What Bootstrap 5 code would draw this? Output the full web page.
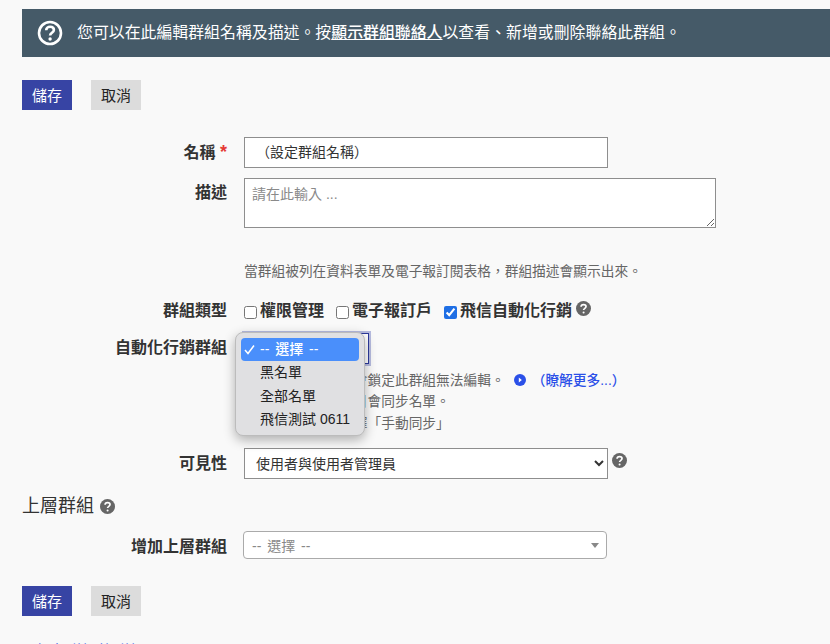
<!DOCTYPE html>
<html lang="zh-Hant">
<head>
    <meta charset="UTF-8">
    <meta name="viewport" content="width=device-width, initial-scale=1.0">
    <title>編輯群組</title>
    <link href="https://cdn.jsdelivr.net/npm/bootstrap@5.3.3/dist/css/bootstrap.min.css" rel="stylesheet">
    <script src="https://cdn.jsdelivr.net/npm/bootstrap@5.3.3/dist/js/bootstrap.bundle.min.js"></script>
    <style>
        html, body {
            height: 644px;
            overflow: hidden;
        }
        body {
            background-color: #f9f9f9;
            font-family: "Liberation Sans", "Noto Sans CJK TC", sans-serif;
            font-size: 14px;
            color: #333;
            padding: 9px 0 0 22px;
        }
        .info-bar {
            height: 48px;
            background-color: #455a68;
            color: #fff;
            font-size: 15.9px;
            padding-left: 15px;
            gap: 14px;
        }
        .info-bar a { color: #fff; font-weight: 500; }
        .act-row { gap: 19px; }
        .act-btn {
            width: 50px;
            height: 30px;
            padding: 1px 0 0;
            border: 0;
            border-radius: 0;
            font-size: 15px;
            line-height: 29px;
        }
        .act-save, .act-save:hover { background-color: #3744a4; color: #fff; }
        .act-cancel, .act-cancel:hover { background-color: #dcdcdc; color: #222; }
        .top-acts { margin-top: 23px; }
        .form-area { margin-top: 27px; }
        .f-label {
            width: 205px;
            flex: none;
            text-align: right;
            font-weight: 700;
            font-size: 16px;
            line-height: 24px;
            color: #333;
        }
        .label-desc { padding-top: 3px; }
        .label-auto { padding-top: 3px; }
        .label-parent { padding-top: 4px; }
        .req { color: #e53935; font-size: 18px; line-height: 1; }
        .f-body { margin-left: 17px; }
        .f-input {
            width: 364px;
            height: 31px;
            border: 1px solid #8e8e8e;
            border-radius: 0;
            background-color: #fff;
            font-size: 14px;
            color: #333;
            padding: 0 11px 3px;
        }
        .vis-select { padding: 0 7px; }
        .f-area {
            display: block;
            width: 472px;
            height: 50px;
            border: 1px solid #8e8e8e;
            border-radius: 0;
            background-color: #fff;
            font-size: 14px;
            padding: 5px 7px;
        }
        .f-area::placeholder { color: #8a8a8a; }
        .hint {
            color: #666;
            font-size: 13.72px;
            line-height: 21.5px;
            white-space: nowrap;
        }
        .hint-desc { margin-top: 33px; }
        .row-desc { margin-top: 10px; }
        .row-type { margin-top: 16px; height: 24px; }
        .row-auto { margin-top: 10px; }
        .row-vis { margin-top: 14px; }
        .parent-title { margin: 15px 0 0; }
        .row-parent { margin-top: 13px; }
        .bottom-acts { margin-top: 27px; }
        .type-opt {
            font-weight: 700;
            font-size: 16px;
            color: #333;
            gap: 3px;
            margin-right: 12px;
        }
        .type-opt input {
            width: 13px;
            height: 13px;
            margin: 3px 0 0;
            accent-color: #1f6fe5;
        }
        .help-dot {
            width: 15px;
            height: 15px;
            flex: none;
            display: block;
        }
        .help-up { margin-top: -4px; }
        .help-up2 { margin-top: -6px; }
        .auto-select {
            width: 125px;
            height: 31px;
            border: 1px solid #2d3a9c;
            background: #fff;
            box-shadow: 0 0 0 2px #b6bbdf;
        }
        .menu-pop {
            position: absolute;
            left: -9px;
            top: -1px;
            width: 130px;
            height: 104px;
            padding: 5px;
            border-radius: 8px;
            border: 1px solid #bcbcbc;
            background-color: #e0e0e2;
            box-shadow: 0 4px 12px rgba(0, 0, 0, .3);
            font-size: 14px;
            color: #222;
            z-index: 5;
        }
        .menu-item {
            height: 23.5px;
            line-height: 23.5px;
            padding-left: 19px;
            border-radius: 4px;
            position: relative;
            white-space: nowrap;
        }
        .menu-item.on {
            background-color: #4a8ffb;
            color: #fff;
            word-spacing: 2px;
            font-weight: 500;
        }
        .tick {
            position: absolute;
            left: 3px;
            top: 6px;
            width: 11px;
            height: 11px;
        }
        .hint-auto { margin-top: 6px; }
        .play-dot { margin: 0 6px 0 9px; }
        .more-link {
            color: #2b50e8;
            font-weight: 500;
            text-decoration: none;
        }
        .sec-title {
            font-size: 18px;
            line-height: 24px;
            font-weight: 400;
            color: #333;
            gap: 6px;
        }
        .s2-fake {
            width: 364px;
            height: 28px;
            margin-left: 16px;
            border: 1px solid #aaa;
            border-radius: 4px;
            background-color: #fff;
            color: #888;
            font-size: 14px;
            word-spacing: 2px;
            padding: 3px 0 0 8px;
            position: relative;
        }
        .s2-fake::after {
            content: "";
            position: absolute;
            right: 7px;
            top: 11px;
            border: 4px solid transparent;
            border-top: 5px solid #888;
            border-bottom: 0;
        }
        .tail-link {
            display: block;
            color: #2b50e8;
            font-size: 16px;
            line-height: 24px;
            text-decoration: none;
            margin: 24px 0 0 11px;
        }
    </style>
</head>
<body>
    <div class="info-bar d-flex align-items-center">
        <svg width="26" height="26" viewBox="0 0 26 26" fill="none">
            <circle cx="13" cy="13" r="11" stroke="#fff" stroke-width="2.6"/>
            <path d="M9.2 10.2c0-2.2 1.7-3.5 3.9-3.5s3.8 1.3 3.8 3.2c0 2.8-3.8 2.9-3.8 5.6" stroke="#fff" stroke-width="2.6"/>
            <circle cx="13.1" cy="19" r="1.7" fill="#fff"/>
        </svg>
        <span>您可以在此編輯群組名稱及描述。按<a href="#">顯示群組聯絡人</a>以查看、新增或刪除聯絡此群組。</span>
    </div>

    <div class="act-row top-acts d-flex">
        <button type="button" class="btn act-btn act-save">儲存</button>
        <button type="button" class="btn act-btn act-cancel">取消</button>
    </div>

    <div class="form-area">
        <div class="d-flex align-items-center">
            <div class="f-label">名稱 <span class="req">*</span></div>
            <div class="f-body"><input type="text" class="f-input d-block" value="（設定群組名稱）"></div>
        </div>
        <div class="d-flex row-desc">
            <div class="f-label label-desc">描述</div>
            <div class="f-body">
                <textarea class="f-area" placeholder="請在此輸入 ..."></textarea>
                <div class="hint hint-desc">當群組被列在資料表單及電子報訂閱表格，群組描述會顯示出來。</div>
            </div>
        </div>
        <div class="d-flex align-items-center row-type">
            <div class="f-label">群組類型</div>
            <div class="f-body d-flex align-items-center">
                <label class="type-opt d-flex align-items-center"><input type="checkbox">權限管理</label>
                <label class="type-opt d-flex align-items-center"><input type="checkbox">電子報訂戶</label>
                <label class="type-opt d-flex align-items-center me-1"><input type="checkbox" checked>飛信自動化行銷</label>
                <svg class="help-dot help-up" viewBox="0 0 16 16"><circle cx="8" cy="8" r="8" fill="#666"/><path d="M5.4 6.2c0-1.500 1.200-2.400 2.700-2.400s2.600.9 2.600 2.100c0 1.900-2.600 1.900-2.600 3.800" fill="none" stroke="#fff" stroke-width="1.800"/><circle cx="8.100" cy="12.200" r="1.100" fill="#fff"/></svg>
            </div>
        </div>
        <div class="d-flex row-auto">
            <div class="f-label label-auto">自動化行銷群組</div>
            <div class="f-body position-relative">
                <div class="auto-select"></div>
                <div class="menu-pop">
                    <div class="menu-item on">
                        <svg class="tick" viewBox="0 0 11 11"><path d="M1 6l3 3.500L10 1.500" fill="none" stroke="#fff" stroke-width="1.500"/></svg>
                        -- 選擇 --
                    </div>
                    <div class="menu-item">黑名單</div>
                    <div class="menu-item">全部名單</div>
                    <div class="menu-item">飛信測試 0611</div>
                </div>
                <div class="hint hint-auto">
                    <div class="d-flex align-items-center">選取此類群組後，會鎖定此群組無法編輯。<svg class="play-dot" width="12" height="12" viewBox="0 0 13 13"><circle cx="6.500" cy="6.500" r="6.500" fill="#2b50e8"/><path d="M5.200 3.800l3.300 2.700-3.300 2.700z" fill="#fff"/></svg><a class="more-link" href="#">（瞭解更多...）</a></div>
                    <div>飛信自動化行銷每日會同步名單。</div>
                    <div>需要同步時，請選擇「手動同步」</div>
                </div>
            </div>
        </div>
        <div class="d-flex align-items-center row-vis">
            <div class="f-label">可見性</div>
            <div class="f-body d-flex align-items-center gap-1">
                <select class="f-input vis-select">
                    <option>使用者與使用者管理員</option>
                </select>
                <svg class="help-dot help-up2" viewBox="0 0 16 16"><circle cx="8" cy="8" r="8" fill="#666"/><path d="M5.4 6.2c0-1.500 1.200-2.400 2.700-2.400s2.600.9 2.600 2.100c0 1.900-2.600 1.900-2.600 3.800" fill="none" stroke="#fff" stroke-width="1.800"/><circle cx="8.100" cy="12.200" r="1.100" fill="#fff"/></svg>
            </div>
        </div>
        <h2 class="sec-title d-flex align-items-center parent-title">上層群組
            <svg class="help-dot" viewBox="0 0 16 16"><circle cx="8" cy="8" r="8" fill="#666"/><path d="M5.4 6.2c0-1.500 1.200-2.400 2.700-2.400s2.600.9 2.600 2.100c0 1.900-2.600 1.900-2.600 3.800" fill="none" stroke="#fff" stroke-width="1.800"/><circle cx="8.100" cy="12.200" r="1.100" fill="#fff"/></svg>
        </h2>
        <div class="d-flex align-items-center row-parent">
            <div class="f-label label-parent">增加上層群組</div>
            <div class="s2-fake d-flex align-items-center">-- 選擇 --</div>
        </div>
    </div>

    <div class="act-row bottom-acts d-flex">
        <button type="button" class="btn act-btn act-save">儲存</button>
        <button type="button" class="btn act-btn act-cancel">取消</button>
    </div>
    <a class="tail-link" href="#">在本群組的群組下</a>
</body>
</html>
